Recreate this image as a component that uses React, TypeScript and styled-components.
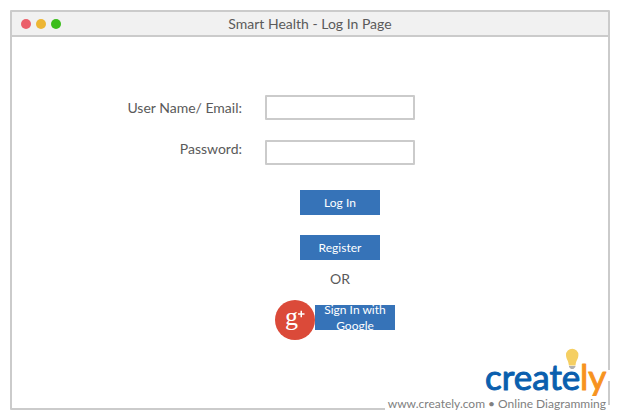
import React from "react";
import styled, { createGlobalStyle } from "styled-components";

const GlobalStyle = createGlobalStyle`
  *, *::before, *::after { box-sizing: border-box; }
  body {
    margin: 0;
    background: #ffffff;
    color: #5a5a5a;
    font-family: Lato, sans-serif;
    font-size: 14px;
    line-height: 20px;
  }
`;

const Page = styled.div`
  position: relative;
  display: flex;
  min-height: 100vh;
  padding: 10px;
`;

const Window = styled.main`
  flex: 1;
  border: 2px solid #cbcbcb;
  border-radius: 1px;
`;

const TitleBar = styled.header`
  display: grid;
  grid-template-columns: 1fr auto 1fr;
  align-items: center;
  height: 25px;
  padding: 0 9px;
  background: #f1f1f1;
  border-bottom: 2px solid #cbcbcb;
`;

const Title = styled.h1`
  margin: 0;
  font-size: 14px;
  font-weight: 400;
`;

const Lights = styled.div`
  display: flex;
  gap: 5px;
`;

const Light = styled.span<{ $color: string }>`
  width: 10px;
  height: 10px;
  border-radius: 50%;
  background: ${(p) => p.$color};
`;

const Form = styled.form`
  display: grid;
  grid-template-columns: 230fr 150px 170fr;
  column-gap: 23px;
  padding: 58px 0 68px;
`;

const Labels = styled.div`
  display: flex;
  flex-direction: column;
  align-items: flex-end;
  gap: 15px;
`;

const Label = styled.label`
  line-height: 26px;
  white-space: nowrap;
`;

const Fields = styled.div`
  display: flex;
  flex-direction: column;
  gap: 20px;
`;

const Field = styled.input`
  width: 100%;
  height: 25px;
  padding: 0 6px;
  border: 2px solid #cbcbcb;
  border-radius: 1px;
  background: #ffffff;
  color: inherit;
  font: inherit;
`;

const Actions = styled.div`
  grid-column: 2;
  display: flex;
  flex-direction: column;
  align-items: center;
  margin-top: 25px;
`;

const Button = styled.button`
  display: flex;
  align-items: center;
  justify-content: center;
  width: 80px;
  height: 25px;
  padding: 0 6px;
  overflow: hidden;
  border: 0;
  background: #3673b8;
  color: #ffffff;
  font: 12px/16px Lato, sans-serif;
  text-align: center;
  cursor: pointer;

  & + & { margin-top: 20px; }
`;

const Divider = styled.p`
  margin: 9px 0 11px;
`;

const GoogleRow = styled.div`
  display: flex;
  align-items: flex-start;
  align-self: flex-start;
  padding-left: 10px;

  ${Button} { margin-top: 5px; }
`;

const Brand = styled.footer`
  position: absolute;
  right: 10px;
  bottom: 8px;
  display: flex;
  flex-direction: column;
  align-items: flex-end;
`;

const Caption = styled.p`
  margin: 0;
  padding: 0 4px 0 3px;
  background:
    linear-gradient(#ffffff, #ffffff) left top / calc(100% - 2px) 100% no-repeat,
    linear-gradient(#ffffff, #ffffff) right bottom / 2px 7px no-repeat;
  color: #808080;
  font-size: 12px;
  line-height: 16px;
`;

const GooglePlus = () => (
  <svg width="40" height="40" viewBox="0 0 40 40" role="img" aria-label="Google Plus">
    <circle cx="20" cy="20" r="20" fill="#db4a39" />
    <text x="10" y="25" fontFamily="Liberation Serif, serif" fontSize="26" fill="#fff">g</text>
    <path d="M23 14h6.500M26.250 10.700v6.600" stroke="#fff" strokeWidth="1.500" />
  </svg>
);

const Logo = () => (
  <svg width="126" height="56" viewBox="0 0 126 56" role="img" aria-label="creately">
    <path d="M122 30h4v11h-4z" fill="#fff" />
    <g fontFamily="Lato, sans-serif" fontSize="35" strokeWidth="1" strokeLinejoin="round">
      <text x="1" y="50" fill="#0a5fae" stroke="#0a5fae">create</text>
      <text x="96" y="50" fill="#f7931e" stroke="#f7931e">ly</text>
    </g>
    <path d="M82 15a6.200 6.200 0 1 1 12.400 0c0 4-2.400 5-2.900 10.500h-6.600c-.5-5.500-2.900-6.500-2.900-10.500z" fill="#f5cf62" />
    <path d="M85 26h6.400v1l-2 2h-2.400l-2-2z" fill="#b0b0b0" />
  </svg>
);

export default function App() {
  return (
    <Page>
      <GlobalStyle />
      <Window>
        <TitleBar>
          <Lights>
            <Light $color="#eb5f6a" />
            <Light $color="#edb634" />
            <Light $color="#3bbd1b" />
          </Lights>
          <Title>Smart Health - Log In Page</Title>
        </TitleBar>
        <Form onSubmit={(e) => e.preventDefault()}>
          <Labels>
            <Label htmlFor="user">User Name/ Email:</Label>
            <Label htmlFor="password">Password:</Label>
          </Labels>
          <Fields>
            <Field id="user" type="text" />
            <Field id="password" type="password" />
          </Fields>
          <Actions>
            <Button type="submit">Log In</Button>
            <Button type="button">Register</Button>
            <Divider>OR</Divider>
            <GoogleRow>
              <GooglePlus />
              <Button type="button">Sign In with Google</Button>
            </GoogleRow>
          </Actions>
        </Form>
      </Window>
      <Brand>
        <Logo />
        <Caption>www.creately.com • Online Diagramming</Caption>
      </Brand>
    </Page>
  );
}
